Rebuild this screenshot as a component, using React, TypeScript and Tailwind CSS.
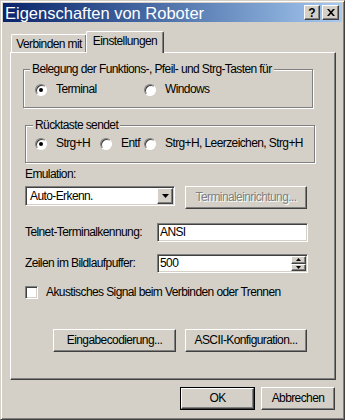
import React from "react";

const raised =
  "bg-[#d4d0c8] border border-t-white border-l-white border-r-[#404040] border-b-[#404040] shadow-[inset_-1px_-1px_#808080]";
const sunken =
  "bg-white border border-t-[#808080] border-l-[#808080] border-r-white border-b-white shadow-[inset_1px_1px_#404040,inset_-1px_-1px_#d4d0c8]";
const etched = "border border-[#808080] shadow-[inset_1px_1px_#fff,1px_1px_#fff]";

function Radio({ checked, label, className = "" }: { checked?: boolean; label: string; className?: string }) {
  return (
    <div className={`flex items-center shrink-0 ${className}`}>
      <span className="w-[12px] h-[12px] shrink-0 rounded-full bg-white border border-t-[#808080] border-l-[#808080] border-r-white border-b-white shadow-[inset_1px_1px_#404040] flex items-center justify-center">
        {checked && <span className="w-[4px] h-[4px] rounded-full bg-black" />}
      </span>
      <span className="ml-[9px] whitespace-nowrap">{label}</span>
    </div>
  );
}

function Button({ label, className = "", disabled }: { label: string; className?: string; disabled?: boolean }) {
  return (
    <div className={`${raised} h-[23px] flex items-center justify-center ${className}`}>
      <span
        className={
          disabled ? "text-[#808080] [text-shadow:1px_1px_0_#fff] whitespace-nowrap" : "whitespace-nowrap"
        }
      >
        {label}
      </span>
    </div>
  );
}

function Arrow({ up, size = 7 }: { up?: boolean; size?: number }) {
  const h = Math.ceil(size / 2);
  return (
    <svg width={size} height={h} viewBox={`0 0 ${size} ${h}`}>
      <polygon
        points={up ? `0,${h} ${size},${h} ${size / 2},0` : `0,0 ${size},0 ${size / 2},${h}`}
        fill="#000"
      />
    </svg>
  );
}

export default function App() {
  return (
    <div className="w-[345px] h-[420px] bg-[#d4d0c8] text-black text-[12px] tracking-[-0.6px] leading-[15px] font-['Liberation_Sans',Arial,sans-serif] border border-t-[#d4d0c8] border-l-[#d4d0c8] border-r-[#404040] border-b-[#404040] shadow-[inset_1px_1px_#fff,inset_-1px_-1px_#808080] p-[2px] flex flex-col overflow-hidden">
      {/* title bar */}
      <div className="h-[19px] shrink-0 flex items-start bg-gradient-to-r from-[#0a246a] to-[#a6caf0]">
        <span className="ml-[2px] mt-[1px] text-white text-[16.5px] leading-[18px] tracking-normal">
          Eigenschaften von Roboter
        </span>
        <div className="ml-auto mr-[3px] mt-[2px] flex gap-[2px]">
          <div className={`${raised} w-[16px] h-[15px] flex items-center justify-center`}>
            <span className="text-[12px] leading-[12px] tracking-normal font-bold">?</span>
          </div>
          <div className={`${raised} w-[17px] h-[15px] flex items-center justify-center`}>
            <svg width="8" height="7" viewBox="0 0 8 7">
              <path d="M0 0h2l2 2.3L6 0h2L5 3.5 8 7H6L4 4.7 2 7H0l3-3.5z" fill="#000" />
            </svg>
          </div>
        </div>
      </div>

      {/* tabs */}
      <div className="mt-[9px] ml-[8px] flex items-end -mb-[1px]">
        <div className="w-[76px] h-[18px] mb-[1px] border-t border-l border-r border-t-white border-l-white border-r-[#404040] shadow-[inset_-1px_0_#808080] rounded-tl-[2px] pt-[2px] text-center whitespace-nowrap">
          Verbinden mit
        </div>
        <div className="relative z-10 -ml-[1px] w-[78px] h-[22px] bg-[#d4d0c8] border-t border-l border-r border-t-white border-l-white border-r-[#404040] shadow-[inset_-1px_0_#808080] rounded-t-[2px] pt-[2px] text-center whitespace-nowrap">
          Einstellungen
        </div>
      </div>

      {/* panel */}
      <div className="ml-[7px] w-[326px] h-[328px] shrink-0 border border-t-white border-l-white border-r-[#404040] border-b-[#404040] shadow-[inset_-1px_-1px_#808080] flex flex-col">
        {/* group 1 */}
        <div className={`relative mt-[16px] ml-[12px] w-[290px] h-[39px] ${etched} flex items-start pl-[11px] pt-[12px]`}>
          <span className="absolute left-[6px] -top-[8px] px-[2px] bg-[#d4d0c8] whitespace-nowrap">
            Belegung der Funktions-, Pfeil- und Strg-Tasten für
          </span>
          <Radio checked label="Terminal" className="w-[109px]" />
          <Radio label="Windows" />
        </div>

        {/* group 2 */}
        <div className={`relative mt-[17px] ml-[14px] w-[290px] h-[38px] ${etched} flex items-start pl-[9px] pt-[10px]`}>
          <span className="absolute left-[7px] -top-[8px] px-[2px] bg-[#d4d0c8] whitespace-nowrap">
            Rücktaste sendet
          </span>
          <Radio checked label="Strg+H" className="w-[65px]" />
          <Radio label="Entf" className="w-[44px]" />
          <Radio label="Strg+H, Leerzeichen, Strg+H" />
        </div>

        <div className="mt-[4px] ml-[14px]">Emulation:</div>

        <div className="mt-[4px] ml-[14px] flex items-start gap-[10px]">
          <div className={`${sunken} w-[150px] h-[20px] p-[1px] flex items-center`}>
            <span className="ml-[3px] flex-1 whitespace-nowrap">Auto-Erkenn.</span>
            <div className={`${raised} w-[16px] h-full flex items-center justify-center`}>
              <Arrow size={7} />
            </div>
          </div>
          <Button label="Terminaleinrichtung..." className="w-[122px] h-[20px]" disabled />
        </div>

        <div className="mt-[14px] ml-[14px] flex items-center">
          <span className="w-[132px] shrink-0 whitespace-nowrap">Telnet-Terminalkennung:</span>
          <div className={`${sunken} w-[151px] h-[19px] flex items-center pl-[2px]`}>ANSI</div>
        </div>

        <div className="mt-[12px] ml-[14px] flex items-center">
          <span className="w-[132px] shrink-0 whitespace-nowrap">Zeilen im Bildlaufpuffer:</span>
          <div className={`${sunken} w-[151px] h-[19px] flex items-center pl-[2px] pr-[1px]`}>
            <span className="flex-1">500</span>
            <div className="w-[15px] h-full flex flex-col py-[1px]">
              <div className={`${raised} flex-1 flex items-center justify-center`}>
                <Arrow up size={5} />
              </div>
              <div className={`${raised} flex-1 flex items-center justify-center`}>
                <Arrow size={5} />
              </div>
            </div>
          </div>
        </div>

        <div className="mt-[12px] ml-[14px] flex items-center">
          <span className={`${sunken} w-[13px] h-[13px] shrink-0`} />
          <span className="ml-[8px] whitespace-nowrap">Akustisches Signal beim Verbinden oder Trennen</span>
        </div>

        <div className="mt-[29px] ml-[42px] flex gap-[9px]">
          <Button label="Eingabecodierung..." className="w-[123px]" />
          <Button label="ASCII-Konfiguration..." className="w-[122px]" />
        </div>
      </div>

      {/* dialog buttons */}
      <div className="mt-[7px] ml-[177px] flex gap-[6px]">
        <div className="w-[75px] h-[23px] border border-black">
          <div className={`${raised} w-full h-full flex items-center justify-center`}>OK</div>
        </div>
        <Button label="Abbrechen" className="w-[74px]" />
      </div>
    </div>
  );
}
